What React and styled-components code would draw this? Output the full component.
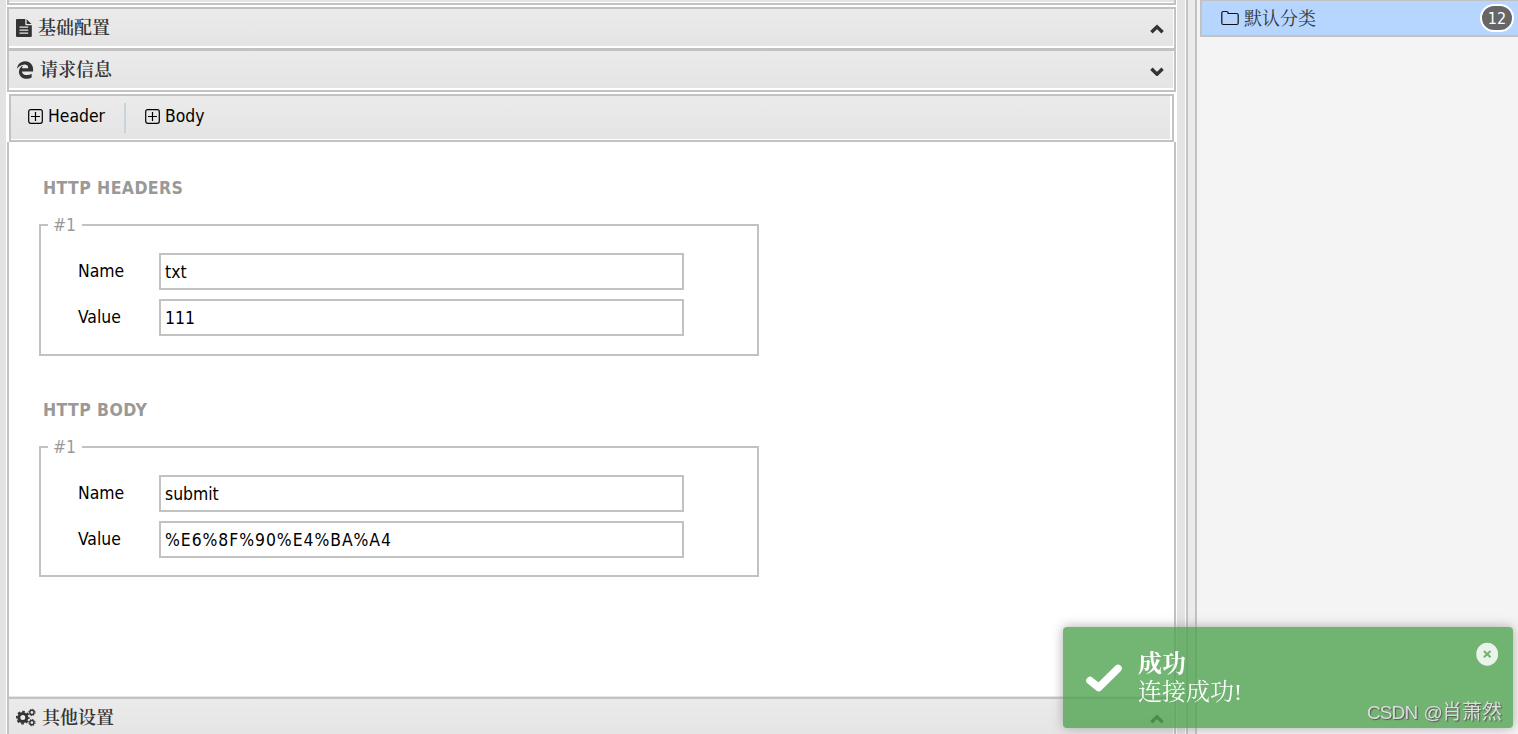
import React from 'react';
import styled, { createGlobalStyle } from 'styled-components';
import { FaEdgeLegacy } from 'react-icons/fa6';

const GlobalStyle = createGlobalStyle`
  * {
    box-sizing: border-box;
  }

  body {
    margin: 0;
    overflow: hidden;
    color: #000;
    font-family: "DejaVu Sans Condensed", "DejaVu Sans", sans-serif;
    font-stretch: condensed;
    font-size: 17.4px;
  }
`;

const serif = '"Liberation Serif", "Noto Serif CJK SC", "Noto Sans CJK SC", serif';

const Page = styled.div`
  display: flex;
  width: 1518px;
  height: 734px;
  background: #f4f4f4;
  overflow: hidden;
`;

const Gutter = styled.div`
  flex: none;
  width: ${props => props.$width}px;
  background: ${props => props.$color || '#e3e3e3'};
`;

const Main = styled.main`
  flex: none;
  display: flex;
  flex-direction: column;
  width: 1171px;
  padding: 0 1px;
  background: #fff;
`;

const TopEdge = styled.div`
  flex: none;
  height: 5px;
  margin-bottom: 2px;
  border: solid #c2c2c2;
  border-width: 0 2px 2px;
  background: linear-gradient(#e4e4e4 2px, #fff 2px);
`;

const Bar = styled.div`
  flex: none;
  display: flex;
  align-items: center;
  justify-content: space-between;
  height: ${props => props.$height}px;
  padding: 0 10px 0 7px;
  border: solid #c2c2c2;
  border-width: ${props => (props.$last ? 3 : 2)}px 2px ${props => (props.$last ? 2 : 0)}px;
  box-shadow: inset -1px -2px 0 #fff;
  background: linear-gradient(#ebebeb, #e4e4e4);
`;

const BarTitle = styled.div`
  display: flex;
  align-items: center;
  gap: ${props => props.$gap}px;
  height: 37px;
  padding-bottom: 2px;
  color: #333;
  font-family: ${serif};
  font-size: 18px;
  font-weight: 600;
  line-height: 24px;
`;

const Toolbar = styled.div`
  flex: none;
  display: flex;
  align-items: center;
  height: 48px;
  margin: 2px 2px 0;
  padding: 0 0 1px 17px;
  border: 2px solid #c2c2c2;
  box-shadow: inset -2px -1px 0 #fff;
  background: linear-gradient(#ebebeb, #e4e4e4);
`;

const ToolButton = styled.button`
  display: flex;
  align-items: center;
  gap: 5px;
  padding: 0 0 3px;
  border: 0;
  background: none;
  color: #000;
  font: inherit;
  line-height: 26px;
`;

const ToolDivider = styled.span`
  width: 2px;
  height: 30px;
  margin: 0 19px;
  background: #c5d5da;
`;

const Content = styled.div`
  flex: none;
  height: 555px;
  padding: 33px 30px 0;
  border: solid #c2c2c2;
  border-width: 0 2px;
  box-shadow: inset 0 -1px 0 #e6e6e6;
`;

const Section = styled.section`
  height: 222px;
`;

const SectionTitle = styled.h3`
  height: 24px;
  margin: 0 0 13px 4px;
  color: #999;
  font-size: 17.5px;
  font-weight: bold;
  letter-spacing: 0.4px;
  line-height: 27px;
`;

const Group = styled.fieldset`
  display: flex;
  flex-direction: column;
  width: 720px;
  height: 144px;
  margin: 0;
  padding: 15px 0 0 36px;
  border: 2px solid #c2c2c2;

  ${Section}:last-child & {
    height: 143px;
  }
`;

const Legend = styled.legend`
  height: 26px;
  margin-left: -29px;
  padding: 0 6px 0 5px;
  color: #999;
  font-size: 17.4px;
  line-height: 26px;
`;

const Field = styled.label`
  display: flex;
  height: 37px;
  margin-bottom: 9px;
`;

const FieldName = styled.span`
  width: 82px;
  padding-left: 1px;
  line-height: 37px;
`;

const Input = styled.input`
  width: 525px;
  height: 37px;
  padding: 1px 4px 0;
  border: 2px solid #c2c2c2;
  background: #fff;
  color: #000;
  font: inherit;
  letter-spacing: ${props => props.$spacing || 0}px;
`;

const Splitter = styled.div`
  flex: none;
  width: 11px;
  border: solid #c2c2c2;
  border-width: 0 2px;
  background: #ebebeb;
`;

const Sidebar = styled.aside`
  flex: 1;
  padding-left: 3px;
`;

const Category = styled.div`
  display: flex;
  align-items: center;
  height: 37px;
  padding: 0 4px 0 19px;
  border: solid #c2c2c2;
  border-width: 1px 0 2px 2px;
  background: #b6d5ff;
  color: #333;
  font-family: ${serif};
  font-size: 18px;
  line-height: 24px;
`;

const CategoryName = styled.span`
  flex: 1;
  margin-left: 5px;
  padding-top: 2px;
`;

const Badge = styled.span`
  width: 34px;
  height: 28px;
  border: 2px solid #fff;
  border-radius: 14px;
  background: #666;
  color: #fff;
  font-family: "DejaVu Sans Condensed", "DejaVu Sans", sans-serif;
  font-size: 16px;
  line-height: 25px;
  text-align: center;
`;

const Toast = styled.div`
  position: fixed;
  right: 5px;
  bottom: 6px;
  display: flex;
  width: 450px;
  height: 101px;
  padding: 23px 14px 0 23px;
  border-radius: 4px;
  box-shadow: 0 0 12px #999;
  background: #51a351;
  color: #fff;
  font-family: ${serif};
  font-size: 24px;
  line-height: 28px;
  opacity: 0.8;
`;

const ToastText = styled.div`
  flex: 1;
  margin-left: 16px;
`;

const ToastTitle = styled.div`
  font-weight: bold;
`;

const Watermark = styled.div`
  position: fixed;
  right: 16px;
  bottom: 7px;
  color: #dcdcdc;
  font-family: "Noto Sans CJK SC", sans-serif;
  font-size: 20px;
  line-height: 28px;
  text-shadow: 1px 1px 1px #555;
`;

const Handle = styled.span`
  font-family: "Liberation Sans", sans-serif;
  font-size: 19px;
  letter-spacing: -0.9px;
  word-spacing: 2px;
`;

const Chevron = ({ down }) => (
  <svg width="14" height="10" viewBox="0 0 14 10" fill="none" stroke="#333" strokeWidth="3.4">
    <path d={down ? 'M1.4 2.7 7 8.2 12.6 2.7' : 'M1.4 8.3 7 2.8 12.6 8.3'} />
  </svg>
);

const FileText = () => (
  <svg width="16" height="18" viewBox="0 0 16 18" fill="#333">
    <path d="M1 0H9.3V5.3Q9.3 6.2 10.2 6.2H15.8V17Q15.8 18 14.8 18H1Q0 18 0 17V1Q0 0 1 0Z" />
    <path d="M10.6 .2 15.5 5H10.6Z" />
    <path d="M3.5 8.2H12.2M3.5 11.2H12.2M3.5 14.2H12.2" stroke="#e9e9e9" strokeWidth="1.3" />
  </svg>
);

const Gears = () => (
  <svg width="20" height="20" viewBox="0 0 20 20" fill="none" stroke="#333">
    <circle cx="6.8" cy="9.6" r="4" strokeWidth="3" />
    <circle cx="6.8" cy="9.6" r="6" strokeWidth="1.8" strokeDasharray="2.6 2.11" strokeDashoffset="1.3" />
    <circle cx="15.9" cy="4.4" r="2.1" strokeWidth="1.4" />
    <circle cx="15.9" cy="4.4" r="3.2" strokeWidth="1" strokeDasharray="1.4 1.11" />
    <circle cx="15.9" cy="14.6" r="2.1" strokeWidth="1.4" />
    <circle cx="15.9" cy="14.6" r="3.2" strokeWidth="1" strokeDasharray="1.4 1.11" />
  </svg>
);

const PlusSquare = () => (
  <svg width="15" height="15" viewBox="0 0 15 15" fill="none" stroke="#000" strokeWidth="1.2">
    <rect x="0.7" y="0.7" width="13.6" height="13.6" rx="2" />
    <path d="M3 7.5h9M7.5 3v9" />
  </svg>
);

const Folder = () => (
  <svg width="18" height="16" viewBox="0 0 18 16" fill="none" stroke="#111" strokeWidth="1.2">
    <path d="M.8 3A1.5 1.5 0 0 1 2.3 1.5H5.6A1.5 1.5 0 0 1 7.1 3V3.5H15.7A1.5 1.5 0 0 1 17.2 5V13A1.5 1.5 0 0 1 15.7 14.5H2.3A1.5 1.5 0 0 1 .8 13Z" />
  </svg>
);

const Check = () => (
  <svg width="36" height="56" viewBox="0 0 36 56" fill="none" stroke="#fff" strokeWidth="7.5" strokeLinecap="round" strokeLinejoin="round">
    <path d="M4 30.5 12.7 37.5 32 18.5" />
  </svg>
);

const Close = () => (
  <svg width="24" height="24" viewBox="0 0 24 24">
    <ellipse cx="12.2" cy="12.2" rx="10.9" ry="11.5" fill="#fff" />
    <path d="M8.9 9.1 15.5 15.3M15.5 9.1 8.9 15.3" stroke="#51a351" strokeWidth="2" />
  </svg>
);

const CloseButton = styled.button`
  width: 24px;
  height: 24px;
  margin-top: -8px;
  padding: 0;
  border: 0;
  background: none;
  opacity: 0.87;

  svg {
    display: block;
  }
`;

const HeaderBar = ({ icon, title, gap, height, down, last }) => (
  <Bar $height={height} $last={last}>
    <BarTitle $gap={gap}>
      {icon}
      {title}
    </BarTitle>
    <Chevron down={down} />
  </Bar>
);

const FieldGroup = ({ title, name, value, spacing }) => (
  <Section>
    <SectionTitle>{title}</SectionTitle>
    <Group>
      <Legend>#1</Legend>
      <Field>
        <FieldName>Name</FieldName>
        <Input defaultValue={name} />
      </Field>
      <Field>
        <FieldName>Value</FieldName>
        <Input defaultValue={value} $spacing={spacing} />
      </Field>
    </Group>
  </Section>
);

const App = () => {
  return (
    <>
      <GlobalStyle />
      <Page>
        <Gutter $width={6} />
        <Main>
          <TopEdge />
          <HeaderBar icon={<FileText />} title="基础配置" gap={6} height={41} />
          <HeaderBar icon={<FaEdgeLegacy size={18} />} title="请求信息" gap={6} height={44} down last />
          <Toolbar>
            <ToolButton><PlusSquare />Header</ToolButton>
            <ToolDivider />
            <ToolButton><PlusSquare />Body</ToolButton>
          </Toolbar>
          <Content>
            <FieldGroup title="HTTP HEADERS" name="txt" value="111" />
            <FieldGroup title="HTTP BODY" name="submit" value="%E6%8F%90%E4%BA%A4" spacing={0.95} />
          </Content>
          <HeaderBar icon={<Gears />} title="其他设置" gap={6} height={41} />
        </Main>
        <Gutter $width={8} />
        <Gutter $width={1} $color="#fff" />
        <Splitter />
        <Sidebar>
          <Category>
            <Folder />
            <CategoryName>默认分类</CategoryName>
            <Badge>12</Badge>
          </Category>
        </Sidebar>
      </Page>
      <Toast>
        <Check />
        <ToastText>
          <ToastTitle>成功</ToastTitle>
          <div>连接成功!</div>
        </ToastText>
        <CloseButton><Close /></CloseButton>
      </Toast>
      <Watermark><Handle>CSDN @</Handle>肖萧然</Watermark>
    </>
  );
};

export default App;
